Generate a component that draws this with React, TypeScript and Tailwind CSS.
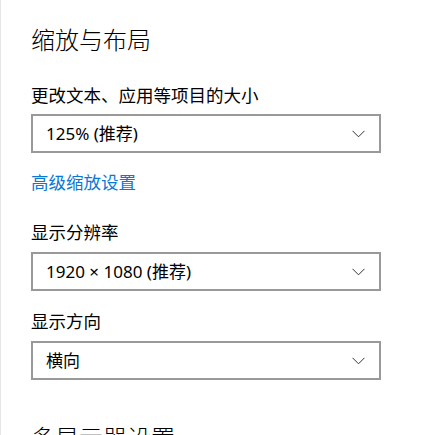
import { ChevronDown } from 'lucide-react';

const font = { fontFamily: '"Noto Sans", "Noto Sans CJK SC", sans-serif' };

function Select({ value }: { value: string }) {
  return (
    <div className="flex items-center justify-between w-[350px] h-[39px] border-2 border-[#999999] bg-white pl-[13px] pr-[14px]">
      <span className="text-[17px] leading-none text-black">{value}</span>
      <svg width="13" height="8" viewBox="0 0 13 8" className="text-[#333]">
        <path d="M0.5 0.8 L6.5 6.8 L12.5 0.8" fill="none" stroke="currentColor" strokeWidth="1" />
      </svg>
    </div>
  );
}

export default function App() {
  return (
    <div className="w-[440px] h-[435px] overflow-hidden bg-white border-l border-[#e6e6e6]" style={font}>
      <div className="flex flex-col pl-[30px] pt-[24px]">
        <h1 className="text-[24px] leading-[32px] font-light text-black">缩放与布局</h1>

        <p className="mt-[27px] text-[17.5px] leading-[24px] text-black">更改文本、应用等项目的大小</p>
        <div className="mt-[7px]">
          <Select value="125% (推荐)" />
        </div>
        <a className="mt-[17px] text-[17.5px] leading-[24px] text-[#0a78d7] cursor-pointer">高级缩放设置</a>

        <p className="mt-[26px] text-[17.5px] leading-[24px] text-black">显示分辨率</p>
        <div className="mt-[8px]">
          <Select value="1920 × 1080 (推荐)" />
        </div>

        <p className="mt-[18px] text-[17.5px] leading-[24px] text-black">显示方向</p>
        <div className="mt-[8px]">
          <Select value="横向" />
        </div>

        <h2 className="mt-[42px] text-[24px] leading-[32px] font-light text-black">多显示器设置</h2>
      </div>
    </div>
  );
}
